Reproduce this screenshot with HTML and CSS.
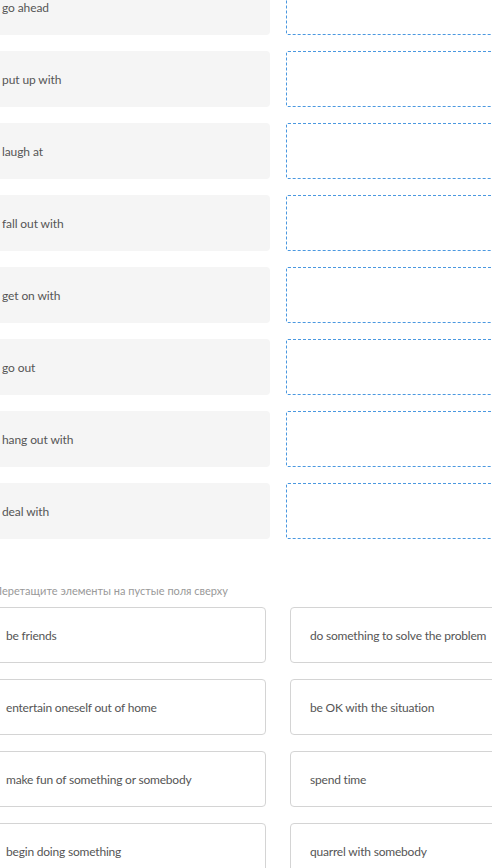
FILE: index.html
```html
<!DOCTYPE html>
<html lang="ru">
<head>
    <meta charset="UTF-8">
    <meta name="viewport" content="width=device-width, initial-scale=1.0">
    <title>Фразовые глаголы</title>
    <link rel="stylesheet" href="styles.css">
</head>
<body>

    <div class="task">
        <div class="pairs">
            <div class="term">go ahead</div>
            <div class="slot"></div>
            <div class="term">put up with</div>
            <div class="slot"></div>
            <div class="term">laugh at</div>
            <div class="slot"></div>
            <div class="term">fall out with</div>
            <div class="slot"></div>
            <div class="term">get on with</div>
            <div class="slot"></div>
            <div class="term">go out</div>
            <div class="slot"></div>
            <div class="term">hang out with</div>
            <div class="slot"></div>
            <div class="term">deal with</div>
            <div class="slot"></div>
        </div>

        <p class="hint">Перетащите элементы на пустые поля сверху</p>

        <div class="options">
            <div class="option">be friends</div>
            <div class="option">do something to solve the problem</div>
            <div class="option">entertain oneself out of home</div>
            <div class="option">be OK with the situation</div>
            <div class="option">make fun of something or somebody</div>
            <div class="option">spend time</div>
            <div class="option">begin doing something</div>
            <div class="option">quarrel with somebody</div>
        </div>
    </div>

</body>
</html>
```

FILE: styles.css
```css
body {
    font-family: Lato, "Noto Sans", sans-serif;
    margin: 0;
    overflow: hidden;
    background: #fff;
}
.task {
    width: 584px;
    margin: -21px 0 0 -14px;
}
.pairs {
    display: grid;
    grid-template-columns: 1fr 1fr;
    column-gap: 16px;
    row-gap: 16px;
}
.term {
    height: 56px;
    display: flex;
    align-items: center;
    padding: 0 16px;
    background-color: #f5f5f5;
    border-radius: 4px;
    font-size: 12px;
    letter-spacing: -0.1px;
    color: #555;
}
.slot {
    height: 56px;
    box-sizing: border-box;
    border: 1px dashed #4a98e0;
    border-radius: 2px;
}
.hint {
    margin: 45px 0 10px 8px;
    font-size: 11px;
    color: #999;
}
.options {
    display: grid;
    grid-template-columns: 1fr 1fr;
    column-gap: 24px;
    row-gap: 16px;
}
.option {
    height: 56px;
    box-sizing: border-box;
    display: flex;
    align-items: center;
    padding: 0 19px;
    border: 1px solid #d4d4d4;
    border-radius: 4px;
    font-size: 12px;
    letter-spacing: -0.2px;
    color: #555;
}
```
